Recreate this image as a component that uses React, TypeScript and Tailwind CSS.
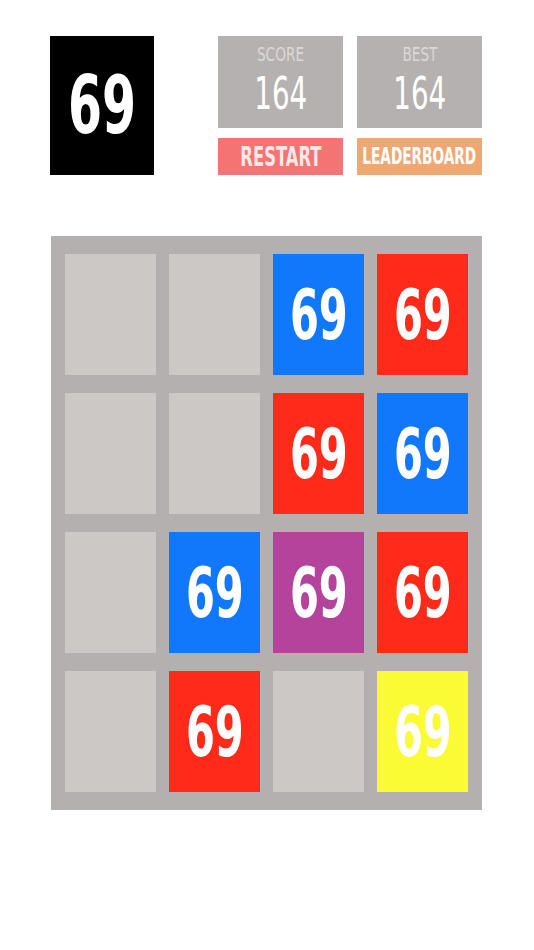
import React from 'react';

type Tile = 'empty' | 'blue' | 'red' | 'purple' | 'yellow';

const board: Tile[][] = [
  ['empty', 'empty', 'blue', 'red'],
  ['empty', 'empty', 'red', 'blue'],
  ['empty', 'blue', 'purple', 'red'],
  ['empty', 'red', 'empty', 'yellow'],
];

const tileColor: Record<Tile, string> = {
  empty: 'bg-[#ccc8c5]',
  blue: 'bg-[#1177fb]',
  red: 'bg-[#ff2a1a]',
  purple: 'bg-[#b3439b]',
  yellow: 'bg-[#fafa35]',
};

const narrow = { fontFamily: '"DejaVu Sans Condensed", "DejaVu Sans", sans-serif' };

function ScoreBox({ label, value }: { label: string; value: number }) {
  return (
    <div className="w-[125px] h-[92px] bg-[#b5b1b0] flex flex-col items-center">
      <span className="mt-[9px] text-[19px] leading-[19px] text-[#dcd8d7] inline-block scale-x-[0.8]" style={narrow}>{label}</span>
      <span className="mt-[8px] text-[44px] leading-[44px] text-white inline-block scale-x-[0.7]" style={narrow}>{value}</span>
    </div>
  );
}

export default function App() {
  return (
    <div className="w-[534px] h-[950px] bg-white">
      {/* header */}
      <div className="flex pt-[36px] pl-[50px]">
        <div className="w-[104px] h-[139px] bg-black flex items-center justify-center">
          <span className="text-white font-bold text-[80px] leading-none inline-block scale-x-[0.68]" style={narrow}>69</span>
        </div>
        <div className="ml-[64px] flex flex-col gap-[10px]">
          <div className="flex gap-[14px]">
            <ScoreBox label="SCORE" value={164} />
            <ScoreBox label="BEST" value={164} />
          </div>
          <div className="flex gap-[14px]">
            <button className="w-[125px] h-[37px] bg-[#f47373] text-[#fde8e8] flex items-center justify-center">
              <span className="font-bold text-[26px] leading-none inline-block scale-x-[0.7] whitespace-nowrap" style={narrow}>RESTART</span>
            </button>
            <button className="w-[125px] h-[37px] bg-[#f0a873] text-white flex items-center justify-center">
              <span className="font-bold text-[23px] leading-none inline-block scale-x-[0.66] whitespace-nowrap" style={narrow}>LEADERBOARD</span>
            </button>
          </div>
        </div>
      </div>

      {/* board */}
      <div className="ml-[51px] mt-[61px] w-[431px] h-[574px] bg-[#b4b0af] px-[14px] py-[18px] grid grid-cols-4 gap-x-[13px] gap-y-[18px]">
        {board.flat().map((t, i) => (
          <div key={i} className={`w-[91px] h-[121px] flex items-center justify-center ${tileColor[t]}`}>
            {t !== 'empty' && (
              <span className="text-white font-bold text-[70px] leading-none inline-block scale-x-[0.66]" style={narrow}>69</span>
            )}
          </div>
        ))}
      </div>
    </div>
  );
}
